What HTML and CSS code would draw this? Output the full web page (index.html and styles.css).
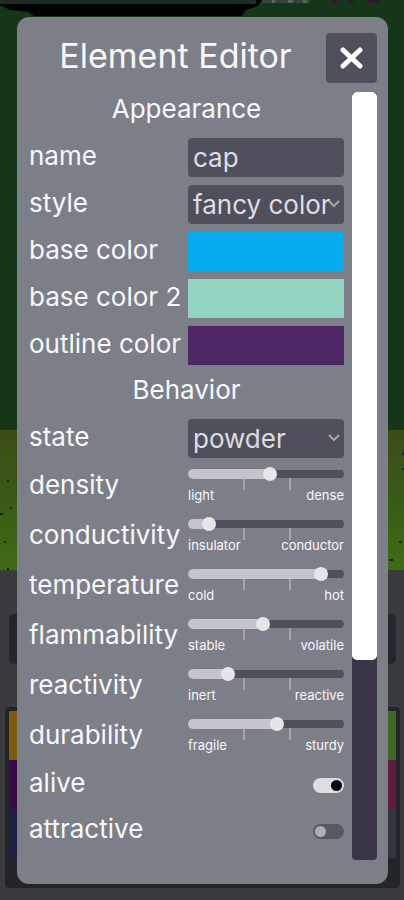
FILE: index.html
```html
<!DOCTYPE html>
<html lang="en">
<head>
    <meta charset="UTF-8">
    <meta name="viewport" content="width=device-width, initial-scale=1.0">
    <title>Element Editor</title>
    <link rel="stylesheet" href="styles.css">
</head>
<body>
    <!-- game world behind the editor -->
    <div class="scene" aria-hidden="true">
        <div class="sky">
            <svg class="cave" width="404" height="20" viewBox="0 0 404 20">
                <path d="M0 0H262L258 6L246 10L242 16H34L28 12L10 10L2 6H0Z" fill="#020403"/>
                <path d="M0 0H256V4H0Z" fill="#1f2a25"/>
                <path d="M262 0h48v3h-48z" fill="#35453a"/>
                <path d="M272 0h3v3h-3zM288 0h5v3h-5zM303 0h4v3h-4z" fill="#5a665d"/>
                <path d="M332 0h5v3h-5zM348 0h6v3h-6zM368 0h12v3h-12z" fill="#2b1c2c"/>
            </svg>
        </div>
        <div class="grass">
            <svg class="seeds" width="404" height="140" viewBox="0 0 404 140" fill="#13251c">
                <path d="M7 50h2v2h-2zM10 77h2v2h-2zM0 83h3v2h-3zM4 111h2v2h-2zM7 138h2v2h-2zM402 22h2v3h-2zM402 38h2v2h-2zM399 111h3v2h-3zM389 129h4v2h-4z"/>
            </svg>
        </div>
        <div class="tools">
            <div class="tool-bar"></div>
            <div class="palette">
                <div class="cell orange"></div>
                <div class="cell green"></div>
                <div class="cell purple"></div>
                <div class="cell crimson"></div>
                <div class="cell navy"></div>
                <div class="cell slate"></div>
            </div>
        </div>
    </div>

    <div class="editor">
        <div class="editor-header">
            <h1>Element Editor</h1>
            <button class="close" type="button" aria-label="Close">
                <svg width="24" height="24" viewBox="0 0 24 24" fill="none" stroke="#fff" stroke-width="5" stroke-linecap="round">
                    <path d="M3 4L20 20M20 4L3 20"/>
                </svg>
            </button>
        </div>

        <div class="editor-body">
            <form class="fields">
                <h2>Appearance</h2>
                <div class="row">
                    <label for="name">name</label>
                    <input class="box" type="text" id="name" value="cap">
                </div>
                <div class="row">
                    <label for="style">style</label>
                    <div class="select">
                        <select class="box" id="style">
                            <option>fancy color</option>
                        </select>
                        <svg class="chevron" width="12" height="8" viewBox="0 0 12 8"><path d="M1 1l5 5 5-5"/></svg>
                    </div>
                </div>
                <div class="row">
                    <label for="base">base color</label>
                    <input class="color" type="color" id="base" value="#08abef">
                </div>
                <div class="row">
                    <label for="base2">base color 2</label>
                    <input class="color" type="color" id="base2" value="#94d4c2">
                </div>
                <div class="row">
                    <label for="outline">outline color</label>
                    <input class="color" type="color" id="outline" value="#502766">
                </div>

                <h2>Behavior</h2>
                <div class="row">
                    <label for="state">state</label>
                    <div class="select">
                        <select class="box" id="state">
                            <option>powder</option>
                        </select>
                        <svg class="chevron" width="12" height="8" viewBox="0 0 12 8"><path d="M1 1l5 5 5-5"/></svg>
                    </div>
                </div>
                <div class="row slider-row">
                    <label for="density">density</label>
                    <div class="slider">
                        <input type="range" id="density" value="53" style="--value: 53%">
                        <div class="ends"><span>light</span><span>dense</span></div>
                    </div>
                </div>
                <div class="row slider-row">
                    <label for="conductivity">conductivity</label>
                    <div class="slider">
                        <input type="range" id="conductivity" value="10" style="--value: 10%">
                        <div class="ends"><span>insulator</span><span>conductor</span></div>
                    </div>
                </div>
                <div class="row slider-row">
                    <label for="temperature">temperature</label>
                    <div class="slider">
                        <input type="range" id="temperature" value="89" style="--value: 89%">
                        <div class="ends"><span>cold</span><span>hot</span></div>
                    </div>
                </div>
                <div class="row slider-row">
                    <label for="flammability">flammability</label>
                    <div class="slider">
                        <input type="range" id="flammability" value="48" style="--value: 48%">
                        <div class="ends"><span>stable</span><span>volatile</span></div>
                    </div>
                </div>
                <div class="row slider-row">
                    <label for="reactivity">reactivity</label>
                    <div class="slider">
                        <input type="range" id="reactivity" value="23" style="--value: 23%">
                        <div class="ends"><span>inert</span><span>reactive</span></div>
                    </div>
                </div>
                <div class="row slider-row">
                    <label for="durability">durability</label>
                    <div class="slider">
                        <input type="range" id="durability" value="58" style="--value: 58%">
                        <div class="ends"><span>fragile</span><span>sturdy</span></div>
                    </div>
                </div>
                <div class="row switch-row">
                    <label for="alive">alive</label>
                    <input class="switch" type="checkbox" id="alive" checked>
                </div>
                <div class="row switch-row">
                    <label for="attractive">attractive</label>
                    <input class="switch" type="checkbox" id="attractive">
                </div>
            </form>
            <div class="scroll-track">
                <div class="scroll-thumb"></div>
            </div>
        </div>
    </div>
</body>
</html>
```
FILE: styles.css
```css
* {
    box-sizing: border-box;
}

body {
    margin: 0;
    padding: 17px 16px 16px 17px;
    min-height: 100vh;
    display: flex;
    background: #3a3b3f;
    color: #f7f8fc;
    font-family: Inter, "Open Sans", sans-serif;
    font-size: 26px;
}

/* game world */
.scene {
    position: fixed;
    inset: 0;
    z-index: -1;
    overflow: hidden;
    display: flex;
    flex-direction: column;
}

.sky {
    height: 430px;
    background: #163619;
}

.cave, .seeds {
    display: block;
}

.grass {
    height: 140px;
    background: linear-gradient(#3a4d19, #3a5a16 50%, #406c15);
}

.tools {
    flex: 1;
    padding: 44px 4px 12px 5px;
}

.tool-bar {
    height: 50px;
    margin: 0 4px 43px;
    border-radius: 5px;
    background: #25262d;
}

.palette {
    display: grid;
    grid-template-columns: 1fr 1fr;
    grid-auto-rows: 49px;
    padding: 4px 4px 30px;
    border-radius: 4px;
    background: #24252b;
}

.orange { background: #7e5a0b; }
.green { background: #426823; }
.purple { background: #370a47; }
.crimson { background: #5c1c3d; }
.navy { background: #1c2144; }
.slate { background: #34353f; }

/* editor panel */
.editor {
    flex: 1;
    min-width: 0;
    display: flex;
    flex-direction: column;
    gap: 9px;
    padding: 16px 11px 24px 12px;
    border-radius: 12px;
    background: #7d7f88;
}

.editor-header {
    display: flex;
    align-items: center;
}

h1 {
    flex: 1;
    margin: 0;
    padding-right: 4px;
    font-size: 34px;
    line-height: 44px;
    padding-bottom: 4px;
    font-weight: 400;
    text-align: center;
}

.close {
    display: flex;
    align-items: center;
    justify-content: center;
    width: 51px;
    height: 50px;
    padding: 0;
    border: none;
    border-radius: 4px;
    background: #50505c;
    cursor: pointer;
}

.editor-body {
    flex: 1;
    display: flex;
    gap: 8px;
}

.fields {
    flex: 1;
    min-width: 0;
    display: flex;
    flex-direction: column;
    gap: 8px;
}

h2 {
    margin: 0;
    height: 38px;
    font-size: 26px;
    line-height: 34px;
    font-weight: 400;
    text-align: center;
}

.row {
    display: grid;
    grid-template-columns: minmax(0, 1fr) 156px;
    align-items: center;
    height: 39px;
}

.slider-row {
    height: 42px;
}

.switch-row {
    height: 38px;
}

label {
    padding-bottom: 4px;
    line-height: 34px;
    white-space: nowrap;
}

.box {
    display: block;
    width: 100%;
    height: 39px;
    padding: 0 5px;
    border: none;
    border-radius: 4px;
    background: #50505c;
    color: #dddde3;
    font: inherit;
    appearance: none;
}

.select {
    position: relative;
}

.chevron {
    position: absolute;
    right: 4px;
    top: 15px;
    fill: none;
    stroke: #a5a5ad;
    stroke-width: 2;
    pointer-events: none;
}

.color {
    width: 100%;
    height: 39px;
    padding: 0;
    border: none;
    background: none;
    appearance: none;
}

.color::-webkit-color-swatch-wrapper {
    padding: 0;
}

.color::-webkit-color-swatch {
    border: none;
    border-radius: 0;
}

/* sliders */
.slider {
    position: relative;
    height: 42px;
    padding-top: 1px;
}

/* the two tick marks under the track */
.slider::before {
    content: "";
    position: absolute;
    left: 35%;
    right: 34%;
    top: 9px;
    height: 15px;
    border: solid #a3a4ad;
    border-width: 0 2px;
}

.slider input {
    position: relative;
    display: block;
    width: 100%;
    height: 14px;
    margin: 0;
    background: none;
    appearance: none;
}

.slider input::-webkit-slider-runnable-track {
    height: 10px;
    border-radius: 5px;
    background:
        linear-gradient(#c5c4cc, #c5c4cc) left / var(--value) 10px no-repeat,
        linear-gradient(#50505c, #50505c) center / 100% 8px no-repeat;
}

.slider input::-webkit-slider-thumb {
    width: 14px;
    height: 14px;
    margin-top: -2px;
    border-radius: 50%;
    background: #e6e6e9;
    appearance: none;
}

.ends {
    display: flex;
    justify-content: space-between;
    margin-top: 6px;
    font-size: 13px;
    line-height: 16px;
}

/* switches */
.switch {
    display: flex;
    align-items: center;
    justify-self: end;
    width: 31px;
    height: 15px;
    margin: 0;
    padding: 0 2px;
    border-radius: 8px;
    background: #58595f;
    appearance: none;
}

.switch::before {
    content: "";
    width: 11px;
    height: 11px;
    border-radius: 50%;
    background: #adadb3;
}

.switch:checked {
    justify-content: flex-end;
    background: #dedde3;
}

.switch:checked::before {
    background: #060608;
}

/* scrollbar */
.scroll-track {
    width: 25px;
    border-radius: 4px;
    background: #3a3648;
}

.scroll-thumb {
    height: 74%;
    border-radius: 5px;
    background: #fff;
}
```
